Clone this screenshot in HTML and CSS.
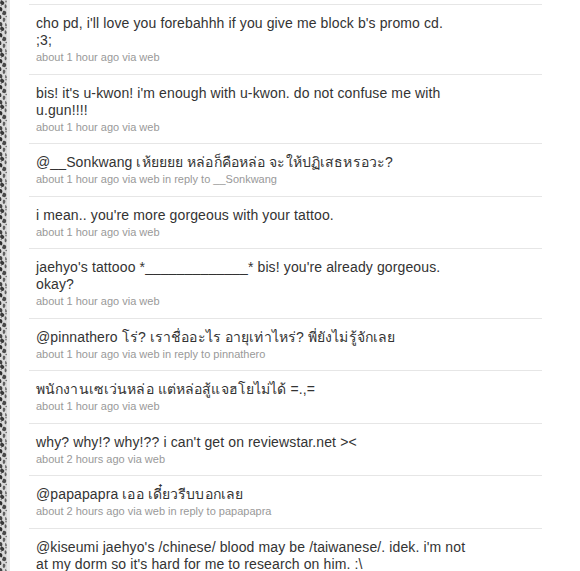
FILE: index.html
```html
<!DOCTYPE html>
<html>
<head>
<meta charset="utf-8">
<link rel="stylesheet" href="styles.css">
</head>
<body>
<div class="page">
  <div class="deco">
    <svg class="deco-art" width="7" height="571" viewBox="0 0 7 571" xmlns="http://www.w3.org/2000/svg">
      <defs>
        <pattern id="lace" width="7" height="26" patternUnits="userSpaceOnUse">
          <rect width="7" height="26" fill="#d9d9d9"/>
          <path d="M1 0 C3 1 5 2 4 4 C3 6 1 5 0 3 Z" fill="#3a3a3a"/>
          <path d="M5 4 C7 5 7 7 6 8 C5 9 4 7 5 4 Z" fill="#5c5c5c"/>
          <path d="M0 7 C2 7 3 9 2 11 C1 12 0 11 0 10 Z" fill="#2f2f2f"/>
          <path d="M3 11 C5 10 7 12 6 14 C5 16 3 15 2 14 Z" fill="#4a4a4a"/>
          <path d="M0 15 C1 15 2 17 1 19 L0 19 Z" fill="#3b3b3b"/>
          <path d="M3 18 C5 17 6 19 5 21 C4 23 2 22 3 18 Z" fill="#606060"/>
          <path d="M0 22 C2 22 3 24 2 26 L0 26 Z" fill="#444"/>
          <path d="M5 23 C6 23 7 24 7 26 L5 26 Z" fill="#777"/>
          <circle cx="6" cy="1.5" r="0.9" fill="#808080"/>
          <circle cx="1.3" cy="5.5" r="0.8" fill="#8a8a8a"/>
          <circle cx="6.2" cy="16.5" r="0.8" fill="#6e6e6e"/>
        </pattern>
      </defs>
      <rect width="7" height="571" fill="url(#lace)"/>
    </svg>
  </div>
  <ol class="timeline">
    <li class="status">
      <p class="text">cho pd, i'll love you forebahhh if you give me block b's promo cd.<br>;3;</p>
      <p class="meta">about 1 hour ago via web</p>
    </li>
    <li class="status">
      <p class="text">bis! it's u-kwon! i'm enough with u-kwon. do not confuse me with u.gun!!!!</p>
      <p class="meta">about 1 hour ago via web</p>
    </li>
    <li class="status">
      <p class="text">@__Sonkwang เห้ยยยย หล่อก็คือหล่อ จะให้ปฏิเสธหรอวะ?</p>
      <p class="meta">about 1 hour ago via web in reply to __Sonkwang</p>
    </li>
    <li class="status">
      <p class="text">i mean.. you're more gorgeous with your tattoo.</p>
      <p class="meta">about 1 hour ago via web</p>
    </li>
    <li class="status">
      <p class="text">jaehyo's tattooo *_____________* bis! you're already gorgeous. okay?</p>
      <p class="meta">about 1 hour ago via web</p>
    </li>
    <li class="status">
      <p class="text">@pinnathero โร่? เราชื่ออะไร อายุเท่าไหร่? พี่ยังไม่รู้จักเลย</p>
      <p class="meta">about 1 hour ago via web in reply to pinnathero</p>
    </li>
    <li class="status">
      <p class="text">พนักงานเซเว่นหล่อ แต่หล่อสู้แจฮโยไม่ได้ =.,=</p>
      <p class="meta">about 1 hour ago via web</p>
    </li>
    <li class="status">
      <p class="text">why? why!? why!?? i can't get on reviewstar.net &gt;&lt;</p>
      <p class="meta">about 2 hours ago via web</p>
    </li>
    <li class="status">
      <p class="text">@papapapra เออ เดี๋ยวรีบบอกเลย</p>
      <p class="meta">about 2 hours ago via web in reply to papapapra</p>
    </li>
    <li class="status">
      <p class="text">@kiseumi jaehyo's /chinese/ blood may be /taiwanese/. idek. i'm not at my dorm so it's hard for me to research on him. :\</p>
      <p class="meta">about 2 hours ago via web in reply to kiseumi</p>
    </li>
  </ol>
</div>
</body>
</html>
```

FILE: styles.css
```css
html, body {
  margin: 0;
  padding: 0;
  background: #ffffff;
  overflow: hidden;
}

.page {
  display: flex;
  align-items: flex-start;
  height: 571px;
  overflow: hidden;
  font-family: "Liberation Sans", Arial, sans-serif;
}

.deco {
  flex: none;
  width: 7px;
  border-right: 3px solid #e8e8e8;
  height: 571px;
}

.deco-art {
  display: block;
}

.timeline {
  list-style: none;
  margin: 0 0 0 19px;
  padding: 4px 0 0 0;
  width: 513px;
}

.status {
  border-top: 1px solid #e6e6e6;
  padding: 10px 0 8.5px 7px;
}

.text {
  margin: 0;
  max-width: 432px;
  font-size: 14px;
  line-height: 17px;
  letter-spacing: 0.12px;
  color: #333333;
}

.meta {
  margin: 1px 0 0 0;
  font-size: 11px;
  line-height: 15px;
  color: #999999;
}
```
